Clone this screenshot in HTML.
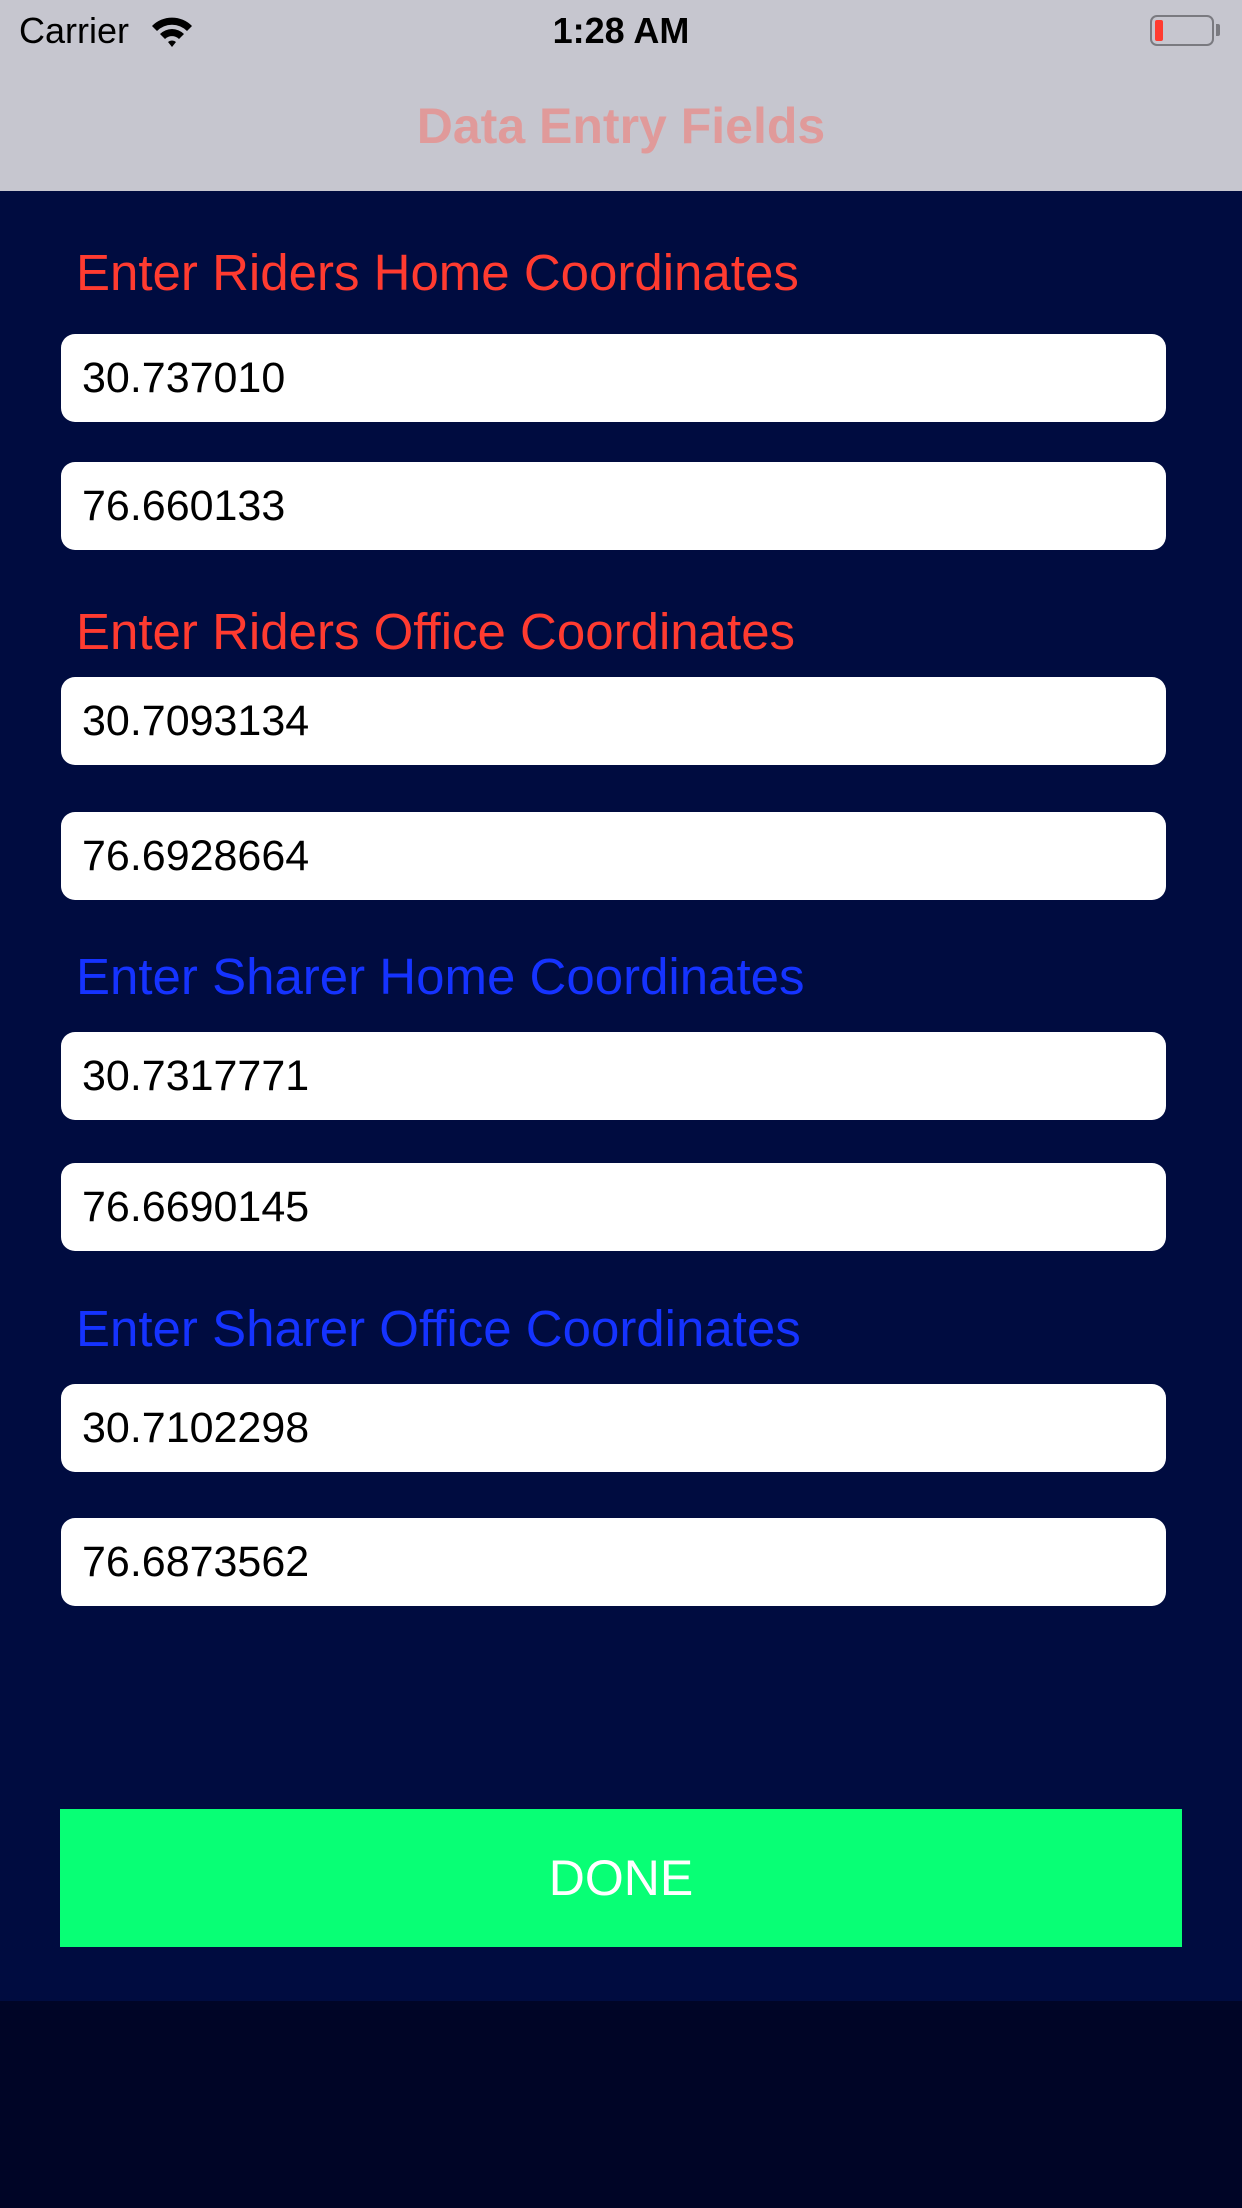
<!DOCTYPE html>
<html><head><meta charset="utf-8"><style>
*{margin:0;padding:0;box-sizing:border-box}
body{width:1242px;height:2208px;background:#000526;font-family:"Liberation Sans",sans-serif;position:relative;overflow:hidden}
.nav{position:absolute;left:0;top:0;width:1242px;height:191px;background:#c6c6cf}
.main{position:absolute;left:0;top:191px;width:1242px;height:1810px;background:#000c40}
.abs{position:absolute}
.lbl{position:absolute;left:76px;font-size:51px;line-height:60px}
.red{color:#ff3b30}.blue{color:#1533ff}
.f{position:absolute;left:61px;width:1105px;height:88px;background:#fff;border-radius:14px;font-size:43px;line-height:88px;padding-left:21px;color:#000}
</style></head><body>
<div class="nav"></div>
<div class="abs" style="left:19px;top:10px;font-size:36px;line-height:42px;color:#000">Carrier</div>
<svg class="abs" style="left:150px;top:14px" width="44" height="34" viewBox="0 0 44 34"><path d="M2 12 A28 28 0 0 1 42 12 L37 17 A21 21 0 0 0 7 17Z M10 20 A17 17 0 0 1 34 20 L29 25 A10 10 0 0 0 15 25Z M18 28 A6 6 0 0 1 26 28 L22 33Z" fill="#000"/></svg>
<div class="abs" style="left:0;width:1242px;text-align:center;top:10px;font-size:36px;line-height:42px;font-weight:bold;color:#000">1:28 AM</div>
<div class="abs" style="left:1150px;top:15px;width:64px;height:31px;border:2px solid #7a7a80;border-radius:7px"></div>
<div class="abs" style="left:1216px;top:24px;width:4px;height:12px;background:#7a7a80;border-radius:0 2px 2px 0"></div>
<div class="abs" style="left:1155px;top:20px;width:8px;height:21px;background:#ff3b30;border-radius:2px"></div>
<div class="abs" style="left:0;width:1242px;text-align:center;top:96px;font-size:50px;line-height:60px;font-weight:bold;color:#e09a9a">Data Entry Fields</div>
<div class="main"></div>
<div class="lbl red" style="top:243px">Enter Riders Home Coordinates</div>
<div class="f" style="top:334px">30.737010</div>
<div class="f" style="top:462px">76.660133</div>
<div class="lbl red" style="top:602px">Enter Riders Office Coordinates</div>
<div class="f" style="top:677px">30.7093134</div>
<div class="f" style="top:812px">76.6928664</div>
<div class="lbl blue" style="top:947px">Enter Sharer Home Coordinates</div>
<div class="f" style="top:1032px">30.7317771</div>
<div class="f" style="top:1163px">76.6690145</div>
<div class="lbl blue" style="top:1299px">Enter Sharer Office Coordinates</div>
<div class="f" style="top:1384px">30.7102298</div>
<div class="f" style="top:1518px">76.6873562</div>
<div class="abs" style="left:60px;top:1809px;width:1122px;height:138px;background:#08ff75;color:#fff;font-size:50px;line-height:138px;text-align:center">DONE</div>
</body></html>
